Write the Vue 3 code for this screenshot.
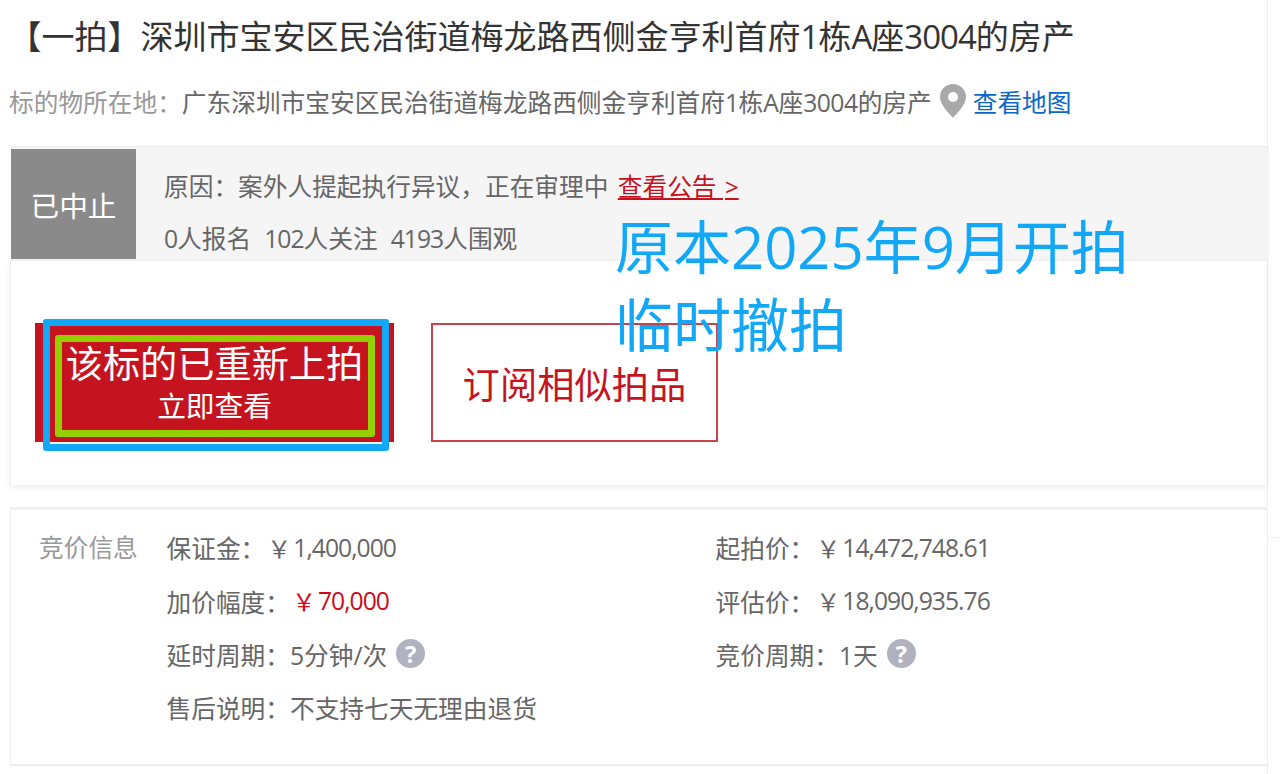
<template>
  <div class="page">
    <h1 class="title">【一拍】深圳市宝安区民治街道梅龙路西侧金亨利首府<span class="num">1</span>栋<span class="num">A</span>座<span class="num">3004</span>的房产</h1>
    <div class="location">
      <span class="loc-label">标的物所在地：</span>
      <span class="loc-value">广东深圳市宝安区民治街道梅龙路西侧金亨利首府<span class="num">1</span>栋<span class="num">A</span>座<span class="num">3004</span>的房产</span>
      <svg class="pin" width="26" height="34" viewBox="0 0 26 34">
        <path d="M13 0C5.800 0 0 5.700 0 12.800 0 21.500 9.500 29.500 13 34c3.500-4.500 13-12.500 13-21.200C26 5.700 20.200 0 13 0z" fill="#a9a9a9" />
        <circle cx="13" cy="13" r="5" fill="#fff" />
      </svg>
      <a class="map-link">查看地图</a>
    </div>

    <div class="status">
      <div class="status-tag">已中止</div>
      <div class="status-body">
        <p class="reason">原因：案外人提起执行异议，正在审理中 <a class="notice">查看公告 <small>&gt;</small></a></p>
        <p class="counts">
          <span><span class="num">0</span>人报名</span>
          <span><span class="num">102</span>人关注</span>
          <span><span class="num">4193</span>人围观</span>
        </p>
      </div>
    </div>

    <div class="actions">
      <div class="relist">
        <span class="relist-main">该标的已重新上拍</span>
        <span class="relist-sub">立即查看</span>
        <i class="frame-blue"></i>
        <i class="frame-green"></i>
      </div>
      <div class="subscribe">订阅相似拍品</div>
    </div>

    <div class="bid">
      <div class="bid-title">竞价信息</div>
      <div class="bid-grid">
        <div v-for="item in bidItems" :key="item.label" class="bid-item">
          <span class="bid-label">{{ item.label }}：</span>
          <span v-if="item.yen" class="yen" :class="{ red: item.red }">￥</span>
          <span :class="{ red: item.red, num: item.yen }">{{ item.value }}</span>
          <span v-if="item.help" class="help">?</span>
        </div>
      </div>
    </div>

    <div class="note">
      <div class="note-line">原本2025年9月开拍</div>
      <div class="note-line">临时撤拍</div>
    </div>
    <i class="side-tick"></i>
  </div>
</template>

<script setup>
const bidItems = [
  { label: '保证金', value: '1,400,000', yen: true },
  { label: '起拍价', value: '14,472,748.61', yen: true },
  { label: '加价幅度', value: '70,000', yen: true, red: true },
  { label: '评估价', value: '18,090,935.76', yen: true },
  { label: '延时周期', value: '5分钟/次', help: true },
  { label: '竞价周期', value: '1天', help: true },
  { label: '售后说明', value: '不支持七天无理由退货' }
]
</script>

<style>
html, body {
  background: #fff;
  overflow: hidden;
}
</style>

<style scoped>
.page {
  position: relative;
  width: 1268px;
  height: 774px;
  box-sizing: border-box;
  border-right: 1px solid #eee;
  font-family: "Open Sans", "Noto Sans CJK SC", sans-serif;
  font-size: 24.7px;
  color: #666;
}

.num {
  letter-spacing: -0.04em;
}

.title {
  margin: 0;
  padding: 14px 0 0 8.5px;
  height: 70px;
  box-sizing: border-box;
  font-size: 33px;
  line-height: 46px;
  font-weight: 400;
  color: #333;
  white-space: nowrap;
}

.title .num {
  letter-spacing: -0.03em;
}

.location {
  display: flex;
  align-items: center;
  height: 76px;
  padding: 0 0 15px 9px;
  box-sizing: border-box;
  white-space: nowrap;
}

.location .num {
  letter-spacing: -0.02em;
}

.loc-label {
  color: #999;
}

.pin {
  margin: 0 7px 0 8px;
  flex: none;
}

.map-link {
  color: #0b68c6;
}

.status {
  display: flex;
  margin-left: 11px;
  width: 1258px;
  height: 114px;
  box-sizing: border-box;
  padding-top: 2px;
  border-top: 1px solid #ececec;
  background: #f5f5f5;
}

.status-tag {
  width: 125px;
  height: 110px;
  background: #8a8a8a;
  color: #fff;
  font-size: 28.7px;
  display: flex;
  align-items: center;
  justify-content: center;
}

.status-body {
  padding-left: 28px;
}

.reason,
.counts {
  margin: 0;
  white-space: nowrap;
}

.reason {
  margin-top: 13px;
  line-height: 50px;
}

.counts {
  display: flex;
  gap: 13px;
  margin-top: 1px;
  line-height: 52px;
}

.notice {
  color: #c5121f;
  margin-left: 3px;
  text-decoration: underline;
  text-decoration-thickness: 2px;
  text-underline-offset: 2px;
}

.notice small {
  font-size: 24px;
  padding: 0 4px 0 2px;
}

.actions {
  display: flex;
  gap: 37px;
  margin-left: 10px;
  width: 1257px;
  height: 225px;
  box-sizing: border-box;
  padding: 62px 0 0 24px;
  background: #fff;
  border-top: 1px solid #eee;
  border-left: 1px solid #eee;
  box-shadow: 0 3px 6px rgba(0, 0, 0, 0.07);
}

.relist {
  position: relative;
  flex: none;
  width: 359px;
  height: 119px;
  background: #c5141f;
  color: #fff;
  display: flex;
  flex-direction: column;
  align-items: center;
}

.relist-main {
  margin-top: 16px;
  font-size: 37.2px;
  line-height: 50px;
}

.relist-sub {
  margin-top: 1px;
  font-size: 28.7px;
  line-height: 32px;
}

.frame-blue {
  position: absolute;
  left: 8px;
  top: -4px;
  width: 346px;
  height: 132px;
  box-sizing: border-box;
  border: 7px solid #12a8f7;
  border-radius: 3px;
}

.frame-green {
  position: absolute;
  left: 20px;
  top: 12px;
  width: 320px;
  height: 102px;
  box-sizing: border-box;
  border: 7px solid #94cf00;
  border-radius: 3px;
}

.subscribe {
  flex: none;
  width: 287px;
  height: 119px;
  box-sizing: border-box;
  border: 2px solid #c8444d;
  color: #c5141f;
  font-size: 37.3px;
  display: flex;
  align-items: center;
  justify-content: center;
}

.bid {
  display: flex;
  margin: 22px 0 0 10px;
  width: 1257px;
  height: 259px;
  box-sizing: border-box;
  padding: 10.5px 0 0 28px;
  border-top: 3px solid #f0f0f0;
  border-left: 1px solid #eee;
  border-bottom: 2px solid #eee;
}

.bid-title {
  width: 127.5px;
  flex: none;
  color: #999;
  line-height: 53.4px;
}

.bid-grid {
  display: grid;
  grid-template-columns: 549px 1fr;
  grid-auto-rows: 53.4px;
}

.bid-item {
  display: flex;
  align-items: center;
  white-space: nowrap;
}

.bid-label {
  flex: none;
}

.yen {
  font-size: 24px;
  width: 24px;
  margin: 0 2px 0 2px;
}

.red {
  color: #cc0a1c;
}

.help {
  width: 29px;
  height: 29px;
  margin-left: 9px;
  border-radius: 50%;
  background: #b0b3bf;
  color: #fff;
  font-size: 24px;
  font-weight: 700;
  line-height: 29px;
  text-align: center;
}

.note {
  position: absolute;
  left: 615px;
  top: 208px;
  color: #12a8f7;
  font-size: 58px;
  white-space: nowrap;
}

.note-line {
  height: 78px;
  line-height: 78px;
}

.side-tick {
  position: absolute;
  left: 1268px;
  top: 537px;
  width: 12px;
  height: 1px;
  background: #eee;
}
</style>
